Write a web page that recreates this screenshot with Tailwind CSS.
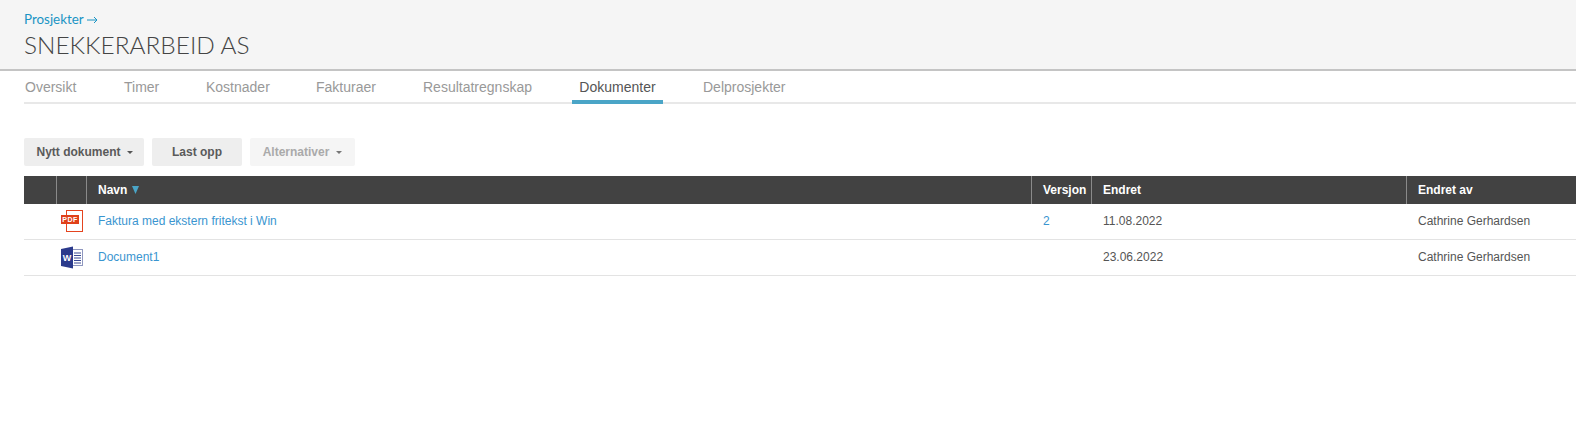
<!DOCTYPE html>
<html><head><meta charset="utf-8"><script src="https://cdn.jsdelivr.net/npm/@tailwindcss/browser@4"></script></head>
<body class="bg-white font-['Liberation_Sans',Arial,sans-serif] overflow-hidden w-[1576px] h-[444px]">
<header class="h-[71px] bg-[#f5f5f5] border-b-2 border-[#c4c4c4] pl-6 pt-[11px]">
  <div class="text-[13.4px] leading-[17px] text-[#1a94c4] font-['Lato',sans-serif] flex items-center gap-[3px]">Prosjekter <svg width="11" height="8" viewBox="0 0 11 8" class="mt-[1px]"><path d="M0 4h10M7 1l3 3-3 3" fill="none" stroke="#1a94c4"/></svg></div>
  <h1 class="text-[24.4px] leading-[30px] mt-[2px] font-light text-[#444] font-['Lato',sans-serif]">SNEKKERARBEID AS</h1>
</header>
<nav class="ml-6 h-[33px] border-b-2 border-[#e8e8e8] flex text-[14px] text-[#999]">
  <a class="pl-[1px] w-[99px] pt-[6px]">Oversikt</a>
  <a class="w-[82px] pt-[6px] pl-[1px]">Timer</a>
  <a class="w-[111px] pt-[6px] pl-[1px]">Kostnader</a>
  <a class="w-[107px] pt-[6px]">Fakturaer</a>
  <a class="w-[149px] pt-[6px]">Resultatregnskap</a>
  <a class="w-[91px] h-[33px] pt-[6px] text-center border-b-[4px] border-[#4aa5c7] text-[#555]">Dokumenter</a>
  <a class="ml-10 pt-[6px]">Delprosjekter</a>
</nav>
<div class="ml-6 mt-[34px] flex gap-2 text-[12px] font-bold">
  <button class="w-[120px] h-[28px] pl-[1px] rounded-[2px] bg-[#eeeeee] text-[#5a5a5a] flex items-center justify-center gap-[6px]">Nytt dokument <span class="border-x-[3px] border-t-[3px] border-x-transparent border-t-[#555]"></span></button>
  <button class="w-[90px] h-[28px] rounded-[2px] bg-[#eeeeee] text-[#5a5a5a]">Last opp</button>
  <button class="w-[105px] h-[28px] rounded-[2px] bg-[#f5f5f5] text-[#aaa] flex items-center justify-center gap-[7px]">Alternativer <span class="border-x-[3px] border-t-[3px] border-x-transparent border-t-[#777]"></span></button>
</div>
<section class="ml-6 mt-[10px] text-[12px]">
  <div class="grid grid-cols-[33px_30px_945px_60px_315px_1fr] h-[28px] bg-[#424242] text-white font-bold items-stretch">
    <div class="border-r border-[#8a8a8a]"></div>
    <div class="border-r border-[#8a8a8a]"></div>
    <div class="border-r border-[#8a8a8a] pl-[11px] flex items-center gap-[5px]">Navn <svg width="7" height="8" viewBox="0 0 7 8"><path d="M0 0h7L3.500 8z" fill="#4aa5c7"/></svg></div>
    <div class="border-r border-[#8a8a8a] pl-[11px] flex items-center">Versjon</div>
    <div class="border-r border-[#8a8a8a] pl-[11px] flex items-center">Endret</div>
    <div class="pl-[11px] flex items-center">Endret av</div>
  </div>
  <div class="grid grid-cols-[33px_30px_945px_60px_315px_1fr] h-[36px] pb-[2px] border-b border-[#e3e3e3] items-center text-[#555]">
    <div></div>
    <div class="flex pl-[4px]">
      <svg width="22" height="23" viewBox="0 0 22 23" class="mt-[1px]"><rect x="5.500" y="0.500" width="16" height="21" fill="#fff" stroke="#e4441f"/><rect x="0" y="5" width="18" height="9" fill="#e0401a"/><text x="9" y="12" text-anchor="middle" font-size="7" font-weight="bold" letter-spacing="0.500" fill="#fff" font-family="Liberation Sans">PDF</text></svg>
    </div>
    <div class="pl-[11px] text-[#3a95d0]">Faktura med ekstern fritekst i Win</div>
    <div class="pl-[11px] text-[#3a95d0]">2</div>
    <div class="pl-[11px]">11.08.2022</div>
    <div class="pl-[11px]">Cathrine Gerhardsen</div>
  </div>
  <div class="grid grid-cols-[33px_30px_945px_60px_315px_1fr] h-[36px] pb-[2px] border-b border-[#e3e3e3] items-center text-[#555]">
    <div></div>
    <div class="flex pl-[4px]">
      <svg width="22" height="23" viewBox="0 0 22 23" class="mt-[1px]"><rect x="8.500" y="3.500" width="13" height="16" fill="#fff" stroke="#8f97bf"/><path d="M13 7h7M13 9.500h7M13 12h7M13 14.500h7M13 17h7" stroke="#3c4a94" stroke-width="1.200"/><path d="M0 3 12 .500v22L0 20z" fill="#2b3a8c"/><text x="6" y="15" text-anchor="middle" font-size="9" font-weight="bold" fill="#fff" font-family="Liberation Sans">W</text></svg>
    </div>
    <div class="pl-[11px] text-[#3a95d0]">Document1</div>
    <div></div>
    <div class="pl-[11px]">23.06.2022</div>
    <div class="pl-[11px]">Cathrine Gerhardsen</div>
  </div>
</section>
</body></html>
